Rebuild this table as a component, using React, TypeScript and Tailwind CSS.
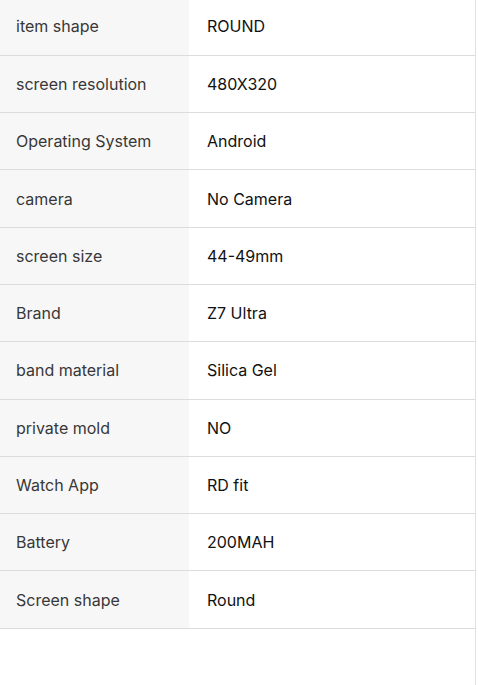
const specs: [string, string][] = [
  ["item shape", "ROUND"],
  ["screen resolution", "480X320"],
  ["Operating System", "Android"],
  ["camera", "No Camera"],
  ["screen size", "44-49mm"],
  ["Brand", "Z7 Ultra"],
  ["band material", "Silica Gel"],
  ["private mold", "NO"],
  ["Watch App", "RD fit"],
  ["Battery", "200MAH"],
  ["Screen shape", "Round"],
];

export default function App() {
  return (
    <div className="min-h-[685px] w-[478px] bg-white font-['Inter',sans-serif]">
      <div className="-mt-[2px] w-[476px] border-r border-[#e0e0e0]">
        <table className="w-full border-collapse text-base">
          <tbody>
            {specs.map(([label, value]) => (
              <tr key={label} className="h-[57.3px] border-b border-[#dcdcdc]">
                <td className="w-[189px] bg-[#f7f7f7] pl-4 text-[#383838]">{label}</td>
                <td className="pl-[18px] text-[#111]">{value}</td>
              </tr>
            ))}
          </tbody>
        </table>
        <div className="h-[59px]" />
      </div>
    </div>
  );
}
